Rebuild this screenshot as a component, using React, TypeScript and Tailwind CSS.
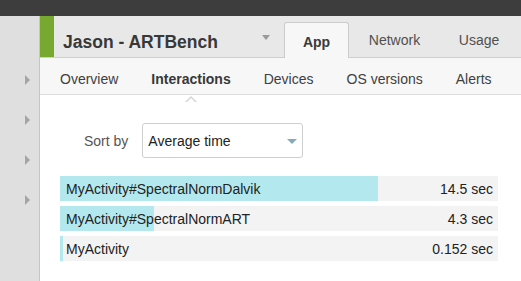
import type { CSSProperties } from "react";

const rows = [
  { name: "MyActivity#SpectralNormDalvik", value: 14.5, label: "14.5 sec" },
  { name: "MyActivity#SpectralNormART", value: 4.3, label: "4.3 sec" },
  { name: "MyActivity", value: 0.152, label: "0.152 sec" },
];

const MAX = 20;

const SideArrow = () => (
  <div className="w-0 h-0 border-y-[5px] border-y-transparent border-l-[5px] border-l-[#a5a5a5]" />
);

const Header = () => (
  <div className="h-[42px] flex items-stretch bg-[#e8e8e8] border-b border-[#cfcfcf]">
    <div className="w-[14px] bg-[#77a930]" />
    <div
      className="pl-[9px] w-[208px] flex items-center pt-[11px] text-[#383838] font-bold text-[17.5px]"
      style={{ fontFamily: '"Liberation Sans Narrow", "Liberation Sans", sans-serif' } as CSSProperties}
    >
      Jason - ARTBench
    </div>
    <div className="flex items-center pt-[1px]">
      <div className="w-0 h-0 border-x-[4px] border-x-transparent border-t-[5px] border-t-[#9a9a9a]" />
    </div>
    <div className="ml-[14px] flex items-end text-[14px]">
      <div className="w-[65px] h-[36px] -mb-px bg-[#f7f7f7] border border-b-0 border-[#cccccc] rounded-t-[3px] flex items-center justify-center pt-[4px] font-bold text-[#3a3a3a]">
        App
      </div>
      <div className="w-[91px] h-[35px] flex items-center justify-center pt-[2px] text-[#505050]">Network</div>
      <div className="w-[78px] h-[35px] flex items-center justify-center pt-[2px] text-[#505050]">Usage</div>
    </div>
  </div>
);

const SubNav = () => (
  <div className="relative h-[37px] bg-[#f7f7f7] border-b border-[#dcdcdc] flex items-center pl-[20px] pt-[6px] gap-[33px] text-[14px] text-[#404040]">
    <span>Overview</span>
    <span className="relative font-bold text-[#383838]">
      Interactions
      <span className="absolute left-1/2 -translate-x-1/2 -bottom-[12px] w-0 h-0 border-x-[6px] border-x-transparent border-b-[6px] border-b-[#d4d4d4]" />
      <span className="absolute left-1/2 -translate-x-1/2 -bottom-[13px] w-0 h-0 border-x-[5px] border-x-transparent border-b-[5px] border-b-white" />
    </span>
    <span>Devices</span>
    <span>OS versions</span>
    <span>Alerts</span>
  </div>
);

const Content = () => (
  <div className="flex-1 bg-white pt-[28px]">
    <div className="flex items-center pl-[44px] gap-[14px]">
      <span className="text-[14px] text-[#555555] pt-[1px]">Sort by</span>
      <div className="w-[161px] h-[35px] border border-[#cfcfcf] rounded-[3px] flex items-center pl-[5px] pr-[5px] pt-[1px] text-[14px] text-[#222222]">
        <span className="flex-1">Average time</span>
        <div className="w-0 h-0 border-x-[5px] border-x-transparent border-t-[5px] border-t-[#84acb6]" />
      </div>
    </div>
    <div className="mt-[18px] ml-[20px] w-[438px] flex flex-col gap-[5px]">
      {rows.map((r) => (
        <div key={r.name} className="relative h-[25px] bg-[#f3f3f3] text-[14px] text-[#222222]">
          <div className="absolute left-0 top-0 bottom-0 bg-[#b3e9ee]" style={{ width: `${(r.value / MAX) * 100}%` }} />
          <div className="relative h-full flex items-center justify-between pl-[6px] pr-[5px] pt-[1px]">
            <span>{r.name}</span>
            <span>{r.label}</span>
          </div>
        </div>
      ))}
    </div>
  </div>
);

export default function App() {
  return (
    <div
      className="w-[521px] h-[281px] overflow-hidden flex flex-col bg-white"
      style={{ fontFamily: '"Liberation Sans", Arial, sans-serif' }}
    >
      <div className="h-[16px] bg-[#3d3d3d]" />
      <div className="flex-1 flex">
        <div className="w-[40px] bg-[#dfdfdf] border-r border-[#c6c6c6] flex flex-col items-end pr-[9px] pt-[59px] gap-[30px]">
          <SideArrow />
          <SideArrow />
          <SideArrow />
          <SideArrow />
        </div>
        <div className="flex-1 flex flex-col">
          <Header />
          <SubNav />
          <Content />
        </div>
      </div>
    </div>
  );
}
